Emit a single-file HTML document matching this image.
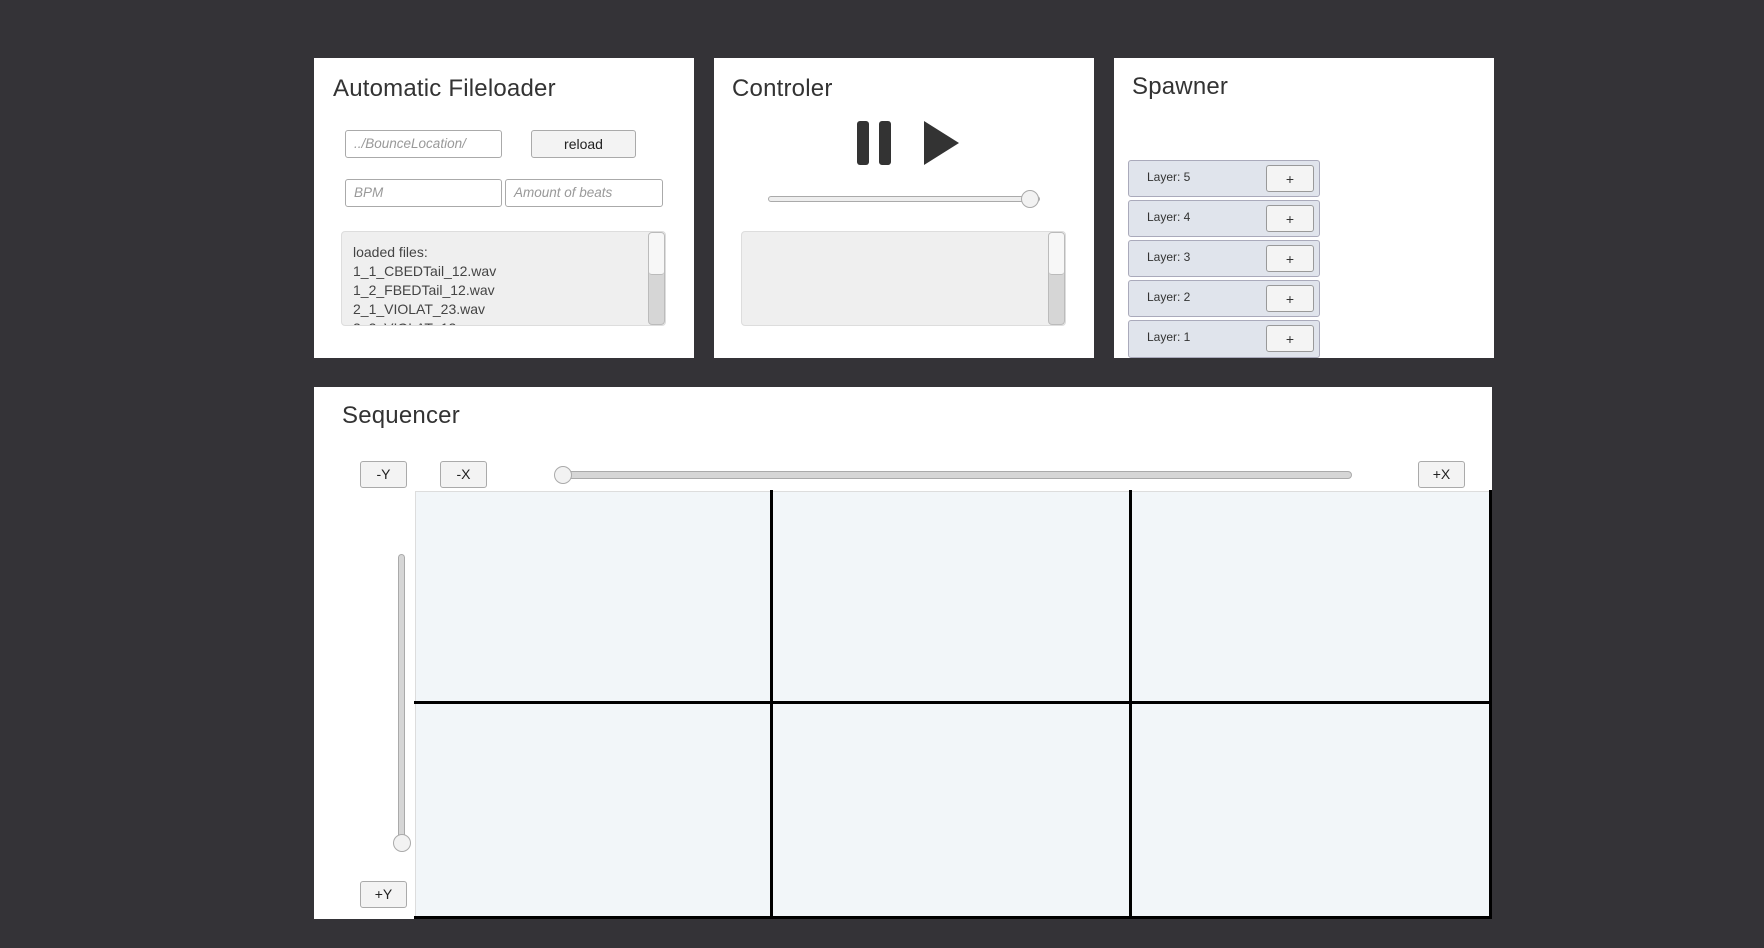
<!DOCTYPE html>
<html><head><meta charset="utf-8"><style>
*{box-sizing:border-box;margin:0;padding:0}
body{width:1764px;height:948px;background:#343337;position:relative;overflow:hidden;font-family:"Liberation Sans",sans-serif;color:#333}
.a{position:absolute}
.panel{position:absolute;background:#fff}
.title{position:absolute;font-size:24px;color:#333;letter-spacing:0.2px}
.inp{position:absolute;border:1px solid #aaa;border-radius:3px;background:#fff;font-style:italic;color:#999;font-size:13.5px;padding:5px 8px}
.btn{position:absolute;border:1px solid #aaa;border-radius:3px;background:#f3f3f3;font-size:14px;color:#222;text-align:center}
.box{position:absolute;background:#efefef;border:1px solid #ddd;border-radius:4px;overflow:hidden}
.sb{position:absolute;top:0;right:0;width:17px;height:100%;background:#d6d6d6;border:1px solid #bbb;border-radius:4px}
.sb i{position:absolute;left:0;top:0;width:15px;height:42px;background:#f7f7f7;border-bottom:1px solid #bbb;border-radius:3px}
.row{position:absolute;left:1128px;width:192px;background:#e0e4ec;border:1px solid #aab;border-radius:3px;font-size:12px;color:#333}
.row span{position:absolute;left:18px;top:9px}
.row b{position:absolute;right:5px;top:4px;width:48px;height:27px;background:#f4f4f4;border:1px solid #999;border-radius:3px;font-weight:normal;text-align:center;line-height:26px;font-size:14px}
.cell{position:absolute;background:#f2f6f9}
.k{position:absolute;background:#000}
</style></head><body>

<div class="panel" style="left:314px;top:58px;width:380px;height:300px">
</div>
<div class="title" style="left:333px;top:75px">Automatic Fileloader</div>
<div class="inp" style="left:345px;top:130px;width:157px;height:28px">../BounceLocation/</div>
<div class="btn" style="left:531px;top:130px;width:105px;height:28px;line-height:26px">reload</div>
<div class="inp" style="left:345px;top:179px;width:157px;height:28px">BPM</div>
<div class="inp" style="left:505px;top:179px;width:158px;height:28px">Amount of beats</div>
<div class="box" style="left:341px;top:231px;width:325px;height:95px">
 <div style="position:absolute;left:11px;top:11px;font-size:14px;line-height:19px;color:#444">loaded files:<br>1_1_CBEDTail_12.wav<br>1_2_FBEDTail_12.wav<br>2_1_VIOLAT_23.wav<br>2_2_VIOLAT_12.wav</div>
 <div class="sb"><i></i></div>
</div>

<div class="panel" style="left:714px;top:58px;width:380px;height:300px"></div>
<div class="title" style="left:732px;top:75px">Controler</div>
<div class="a" style="left:857px;top:121px;width:12px;height:44px;background:#333;border-radius:3px"></div>
<div class="a" style="left:879px;top:121px;width:12px;height:44px;background:#333;border-radius:3px"></div>
<svg class="a" style="left:924px;top:121px" width="35" height="44"><polygon points="0,0 35,22 0,44" fill="#333"/></svg>
<div class="a" style="left:768px;top:196px;width:272px;height:6px;background:#eee;border:1px solid #aaa;border-radius:3px"></div>
<div class="a" style="left:1021px;top:190px;width:18px;height:18px;background:#f2f2f2;border:1px solid #aaa;border-radius:50%"></div>
<div class="box" style="left:741px;top:231px;width:325px;height:95px"><div class="sb"><i></i></div></div>

<div class="panel" style="left:1114px;top:58px;width:380px;height:300px"></div>
<div class="title" style="left:1132px;top:73px">Spawner</div>
<div class="row" style="top:160px;height:37px"><span>Layer: 5</span><b>+</b></div>
<div class="row" style="top:200px;height:37px"><span>Layer: 4</span><b>+</b></div>
<div class="row" style="top:240px;height:37px"><span>Layer: 3</span><b>+</b></div>
<div class="row" style="top:280px;height:37px"><span>Layer: 2</span><b>+</b></div>
<div class="row" style="top:320px;height:38px"><span>Layer: 1</span><b>+</b></div>

<div class="panel" style="left:314px;top:387px;width:1178px;height:532px"></div>
<div class="title" style="left:342px;top:402px">Sequencer</div>
<div class="btn" style="left:360px;top:461px;width:47px;height:27px;line-height:25px">-Y</div>
<div class="btn" style="left:440px;top:461px;width:47px;height:27px;line-height:25px">-X</div>
<div class="btn" style="left:1418px;top:461px;width:47px;height:27px;line-height:25px">+X</div>
<div class="btn" style="left:360px;top:881px;width:47px;height:27px;line-height:25px">+Y</div>
<div class="a" style="left:560px;top:471px;width:792px;height:8px;background:#d6d6d6;border:1px solid #aaa;border-radius:4px"></div>
<div class="a" style="left:554px;top:466px;width:18px;height:18px;background:#f2f2f2;border:1px solid #aaa;border-radius:50%"></div>
<div class="a" style="left:398px;top:554px;width:7px;height:290px;background:#d6d6d6;border:1px solid #aaa;border-radius:4px"></div>
<div class="a" style="left:393px;top:834px;width:18px;height:18px;background:#f2f2f2;border:1px solid #aaa;border-radius:50%"></div>

<div class="cell" style="left:415px;top:491px;width:1075px;height:426px;border:1px solid #ddd"></div>
<div class="k" style="left:770px;top:490px;width:3px;height:429px"></div>
<div class="k" style="left:1129px;top:490px;width:3px;height:429px"></div>
<div class="k" style="left:1489px;top:490px;width:3px;height:429px"></div>
<div class="k" style="left:414px;top:701px;width:1078px;height:3px"></div>
<div class="k" style="left:414px;top:916px;width:1078px;height:3px"></div>
</body></html>
